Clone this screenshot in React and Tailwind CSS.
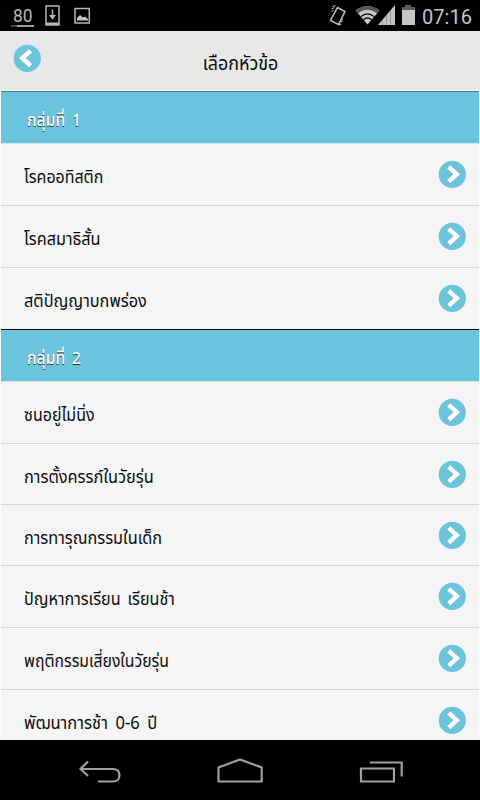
const FONT = 'font-["Noto_Sans_Thai","Noto_Sans",Roboto,"Liberation_Sans",sans-serif]';

function Arrow({ left }) {
  return (
    <svg className="size-7 shrink-0" viewBox="0 0 28 28">
      <circle cx="14.3" cy="14.4" r="13.6" fill="#6cc4dc" />
      <path
        d={left ? 'M17.600 6.800 L9.200 14 L17.600 21.600' : 'M10.700 6.800 L18.800 14.200 L10.700 21.600'}
        fill="none"
        stroke="#fff"
        strokeWidth="4.4"
      />
    </svg>
  );
}

function Group({ label, className }) {
  return (
    <div className={`flex shrink-0 h-[53px] items-start border-t border-b border-b-[#d5e8ee] bg-[#6bc4dd] pl-[26px] ${className}`}>
      <span className="mt-[17px] origin-left scale-x-[0.925] whitespace-nowrap text-[17px] font-medium leading-6 text-white [word-spacing:3px] [text-shadow:0_1px_0_#333]">{label}</span>
    </div>
  );
}

function Row({ label, height, squeeze }) {
  return (
    <div className={`flex shrink-0 items-start justify-between border-b border-[#d3d3d3] pl-[23px] pr-[13px] ${height}`}>
      <span className={`mt-[22px] origin-left whitespace-nowrap text-[18px] leading-6 text-[#0c0c0c] ${squeeze}`}>{label}</span>
      <span className="mt-[16px]"><Arrow /></span>
    </div>
  );
}

function StatusBar() {
  return (
    <div className="flex h-[31px] shrink-0 items-center bg-black">
      <svg className="h-[31px] w-[100px]" viewBox="0 0 100 31" fill="none">
        <text x="13" y="22" fontSize="17.5" fill="#b8b8b8" fontFamily="Roboto" textLength="19.500" lengthAdjust="spacingAndGlyphs">80</text>
        <path d="M11 26h6" stroke="#555" strokeWidth="1.6" />
        <path d="M17 26h17" stroke="#c4c4c4" strokeWidth="1.6" />
        <path d="M46 6h13v19H46z" stroke="#b8b8b8" strokeWidth="1.500" />
        <path d="M46 22.500h13V25H46z" fill="#b8b8b8" />
        <path d="M52.500 9.500v9" stroke="#b8b8b8" strokeWidth="1.500" />
        <path d="M49 15h7l-3.500 4.500z" fill="#b8b8b8" />
        <path d="M75 8.500h14.300v14.500H75z" stroke="#b8b8b8" strokeWidth="1.500" />
        <path d="M77 20.500v-2.500l3-3 3 2.500 2-1 3 2.500v1.500z" fill="#c4c4c4" />
      </svg>
      <svg className="ml-auto h-[31px] w-[160px]" viewBox="320 0 160 31" fill="none">
        <g stroke="#c0c0c0">
          <path d="M337.500 7.500l7.500 4-6.500 13-8-4z" strokeWidth="1.500" />
          <path d="M332.500 6.500l3-1M331.500 9l3-1.500M331.500 11.500l2-1M338.500 25l3-1M339.500 22.500l3-1.500M341 20l2-1" strokeWidth="1" />
        </g>
        <path d="M355.500 10.500Q367.500 1.500 379.500 10.500L367.500 24.500z" fill="#c8c8c8" />
        <path d="M355.500 10.500Q367.500 1.500 379.500 10.500L377 13.500Q367.500 6 358 13.500z" fill="#555" />
        <path d="M360.800 16.600Q367.500 11 374.200 16.600M363.400 19.800Q367.500 16 371.600 19.800" stroke="#000" strokeWidth="1.200" />
        <path d="M378 25L395 5v20z" fill="#c6c6c6" />
        <path d="M382.500 19.500v5.500M386.500 15v10M390.500 10.500v14.500" stroke="#888" strokeWidth="0.800" />
        <path d="M405 5h6v2h4v4h-13V7h3z" fill="#5c5c5c" />
        <path d="M402 10h13v15h-13z" fill="#c6c6c6" />
        <text x="422" y="23.500" fontSize="21" fill="#c4c4c4" fontFamily="Roboto" textLength="50" lengthAdjust="spacingAndGlyphs">07:16</text>
      </svg>
    </div>
  );
}

function NavBar() {
  return (
    <div className="h-[60px] shrink-0 bg-black">
      <svg className="h-[60px] w-[480px]" viewBox="0 740 480 60" fill="none" stroke="#a0a0a0" strokeWidth="2.200">
        <path d="M81 769h31.500q7 0 7 6.300t-7 6.200H98M88 761.500l-7.500 7.500 7.500 7" />
        <path d="M218.500 781.500v-14l21.500-8 21.700 8v14z" />
        <path d="M361 768.500h33v13h-33zM370 762.500h31.700v14" />
      </svg>
    </div>
  );
}

export default function App() {
  return (
    <div className={`flex h-[800px] w-[480px] flex-col overflow-hidden bg-[#f5f5f5] ${FONT}`}>
      <StatusBar />
      <header className="flex h-[60px] shrink-0 items-start border-b border-[#fafafa] bg-[#e8e8e8] pl-[13px]">
        <span className="mt-[13px]"><Arrow left /></span>
        <h1 className="mr-[40px] mt-[22px] flex-1 scale-x-[0.94] whitespace-nowrap text-center text-[19px] leading-6 text-[#0c0c0c]">เลือกหัวข้อ</h1>
      </header>
      <main className="flex min-h-0 flex-1 flex-col overflow-hidden border-x border-[#fcfcfc]">
        <Group label="กลุ่มที่ 1" className="border-t-[#4f7888]" />
        <Row label="โรคออทิสติก" height="h-[62px]" squeeze="scale-x-[0.888]" />
        <Row label="โรคสมาธิสั้น" height="h-[62px]" squeeze="scale-x-[0.9]" />
        <Row label="สติปัญญาบกพร่อง" height="h-[61px] border-b-0" squeeze="scale-x-[0.905]" />
        <Group label="กลุ่มที่ 2" className="border-t-black" />
        <Row label="ซนอยู่ไม่นิ่ง" height="h-[62px]" squeeze="scale-x-[0.89]" />
        <Row label="การตั้งครรภ์ในวัยรุ่น" height="h-[61px]" squeeze="scale-x-[0.908]" />
        <Row label="การทารุณกรรมในเด็ก" height="h-[61px]" squeeze="scale-x-[0.903]" />
        <Row label="ปัญหาการเรียน เรียนช้า" height="h-[62px]" squeeze="scale-x-[0.897] [word-spacing:3px]" />
        <Row label="พฤติกรรมเสี่ยงในวัยรุ่น" height="h-[62px]" squeeze="scale-x-[0.876]" />
        <Row label="พัฒนาการช้า 0-6 ปี" height="h-[62px]" squeeze="scale-x-[0.92] [word-spacing:3.5px]" />
      </main>
      <NavBar />
    </div>
  );
}
